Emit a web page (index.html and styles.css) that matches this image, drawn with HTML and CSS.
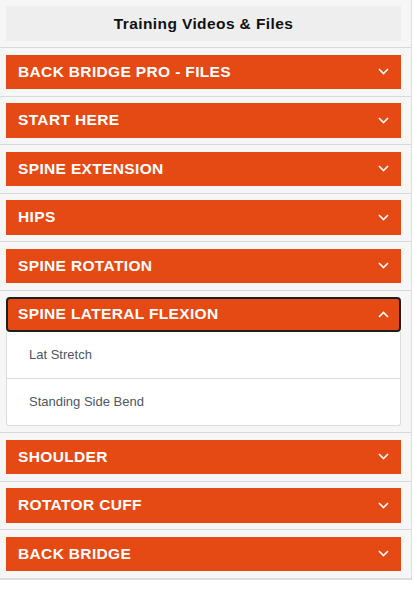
FILE: index.html
```html
<!DOCTYPE html>
<html>
<head>
<meta charset="utf-8">
<link rel="stylesheet" href="styles.css">
</head>
<body>
<div class="panel">
  <div class="section head">
    <div class="title">Training Videos &amp; Files</div>
  </div>
  <div class="section"><div class="acc"><span>BACK BRIDGE PRO - FILES</span><svg class="chev" viewBox="0 0 11 7"><path d="M1 1 L5.5 5.5 L10 1"/></svg></div></div>
  <div class="section"><div class="acc"><span>START HERE</span><svg class="chev" viewBox="0 0 11 7"><path d="M1 1 L5.5 5.5 L10 1"/></svg></div></div>
  <div class="section"><div class="acc"><span>SPINE EXTENSION</span><svg class="chev" viewBox="0 0 11 7"><path d="M1 1 L5.5 5.5 L10 1"/></svg></div></div>
  <div class="section"><div class="acc"><span>HIPS</span><svg class="chev" viewBox="0 0 11 7"><path d="M1 1 L5.5 5.5 L10 1"/></svg></div></div>
  <div class="section"><div class="acc"><span>SPINE ROTATION</span><svg class="chev" viewBox="0 0 11 7"><path d="M1 1 L5.5 5.5 L10 1"/></svg></div></div>
  <div class="section">
    <div class="acc open"><span>SPINE LATERAL FLEXION</span><svg class="chev" viewBox="0 0 11 7"><path d="M1 6 L5.5 1.5 L10 6"/></svg></div>
    <div class="items">
      <div class="item">Lat Stretch</div>
      <div class="item">Standing Side Bend</div>
    </div>
  </div>
  <div class="section"><div class="acc"><span>SHOULDER</span><svg class="chev" viewBox="0 0 11 7"><path d="M1 1 L5.5 5.5 L10 1"/></svg></div></div>
  <div class="section"><div class="acc"><span>ROTATOR CUFF</span><svg class="chev" viewBox="0 0 11 7"><path d="M1 1 L5.5 5.5 L10 1"/></svg></div></div>
  <div class="section last"><div class="acc"><span>BACK BRIDGE</span><svg class="chev" viewBox="0 0 11 7"><path d="M1 1 L5.5 5.5 L10 1"/></svg></div></div>
</div>
</body>
</html>
```
FILE: styles.css
```css
* { box-sizing: border-box; }
html, body { margin: 0; padding: 0; background: #ffffff; }
body { font-family: "Liberation Sans", Arial, sans-serif; }
.panel {
  width: 412px;
  background: #f6f6f6;
  border-right: 1px solid #dedede;
  border-bottom: 2px solid #dedede;
}
.section {
  padding: 6.5px 10px 6.5px 6px;
  border-bottom: 1px solid #d9d9d9;
}
.section.head { padding: 6px 10px 6px 6px; }
.section.last { border-bottom: none; }
.title {
  height: 35px;
  background: #eeeeee;
  display: flex;
  align-items: center;
  justify-content: center;
  font-weight: bold;
  font-size: 15.5px;
  color: #111;
  letter-spacing: 0.4px;
}
.acc {
  height: 34.5px;
  background: #e64a14;
  color: #fff;
  display: flex;
  align-items: center;
  justify-content: space-between;
  padding: 0 12px 0 12px;
  font-weight: bold;
  font-size: 15.5px;
  letter-spacing: 0.35px;
}
.acc.open {
  border: 2px solid #1e1e1e;
  border-radius: 4px;
  padding: 0 10px 0 10px;
}
.chev {
  width: 11px;
  height: 7px;
  fill: none;
  stroke: #fff;
  stroke-width: 1.6;
}
.items {
  background: #fff;
  border: 1px solid #dcdcdc;
  border-top: none;
  border-radius: 0 0 3px 3px;
}
.item {
  height: 46.5px;
  display: flex;
  align-items: center;
  padding-left: 22px;
  font-size: 13px;
  color: #4f5661;
}
.item + .item { border-top: 1px solid #dcdcdc; }
```
